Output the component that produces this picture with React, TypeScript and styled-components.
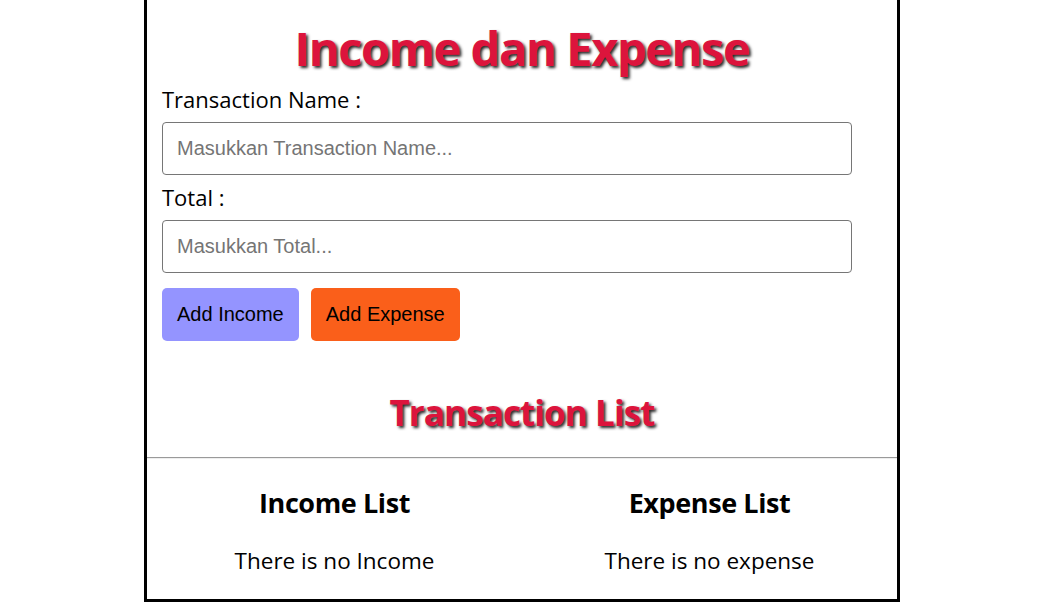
import React from "react";
import styled, { createGlobalStyle } from "styled-components";

const GlobalStyle = createGlobalStyle`
  html, body {
    margin: 0;
    padding: 0;
    background: #ffffff;
  }
  body {
    font-family: "Open Sans", "Noto Sans", sans-serif;
    color: #000000;
  }
`;

const Page = styled.div`
  padding-right: 15px;
`;

const Container = styled.div`
  width: 750px;
  margin: 0 auto;
  border: 3px solid #000000;
  border-top: none;
  padding: 19px 0 23px;
  transform: translateX(1px);
`;

const Form = styled.div`
  padding: 0 15px;
  display: flex;
  flex-direction: column;
`;

const Heading = styled.h1<{ $size: number; $lh: number }>`
  margin: 0;
  text-align: center;
  font-size: ${({ $size }) => $size}px;
  line-height: ${({ $lh }) => $lh}px;
  font-weight: 700;
  color: #dc143c;
  letter-spacing: ${({ $size }) => ($size > 40 ? -1.4 : -0.9)}px;
  text-shadow: 2px 2px 3px rgba(0, 0, 0, 0.85);
`;

const Label = styled.label`
  font-size: 22px;
  line-height: 30px;
  margin-top: 7px;
`;

const Input = styled.input`
  box-sizing: border-box;
  width: 690px;
  height: 53px;
  margin-top: 8px;
  padding: 0 14px;
  border: 1px solid #767676;
  border-radius: 4px;
  font-family: "Liberation Sans", Arial, sans-serif;
  font-size: 20px;
  color: #000000;
  outline: none;

  &::placeholder {
    color: #757575;
  }
`;

const ButtonRow = styled.div`
  display: flex;
  gap: 12px;
  margin-top: 15px;
`;

const Button = styled.button<{ $bg: string }>`
  height: 53px;
  padding: 0 15px;
  border: none;
  border-radius: 5px;
  background: ${({ $bg }) => $bg};
  font-family: "Liberation Sans", Arial, sans-serif;
  font-size: 20px;
  color: #000000;
  cursor: pointer;
`;

const ListTitle = styled.div`
  margin-top: 51px;
`;

const Divider = styled.hr`
  margin: 23px 0 0;
  border: none;
  border-top: 1px solid #9a9a9a;
  border-bottom: 1px solid #eeeeee;
`;

const Columns = styled.div`
  display: grid;
  grid-template-columns: 1fr 1fr;
  margin-top: 27px;
`;

const Column = styled.div`
  display: flex;
  flex-direction: column;
  align-items: center;
`;

const ColumnTitle = styled.h2`
  margin: 0;
  font-size: 27px;
  line-height: 34px;
  font-weight: 700;
  letter-spacing: -0.4px;
`;

const EmptyText = styled.p`
  margin: 26px 0 0;
  font-size: 22.5px;
  line-height: 30px;
`;

export default function App() {
  return (
    <Page>
      <GlobalStyle />
      <Container>
        <Heading $size={47} $lh={58}>
          Income dan Expense
        </Heading>
        <Form>
          <Label>Transaction Name :</Label>
          <Input placeholder="Masukkan Transaction Name..." />
          <Label>Total :</Label>
          <Input placeholder="Masukkan Total..." />
          <ButtonRow>
            <Button $bg="#9494ff">Add Income</Button>
            <Button $bg="#fa5f1a">Add Expense</Button>
          </ButtonRow>
        </Form>
        <ListTitle>
          <Heading $size={35} $lh={42}>
            Transaction List
          </Heading>
        </ListTitle>
        <Divider />
        <Columns>
          <Column>
            <ColumnTitle>Income List</ColumnTitle>
            <EmptyText>There is no Income</EmptyText>
          </Column>
          <Column>
            <ColumnTitle>Expense List</ColumnTitle>
            <EmptyText>There is no expense</EmptyText>
          </Column>
        </Columns>
      </Container>
    </Page>
  );
}
